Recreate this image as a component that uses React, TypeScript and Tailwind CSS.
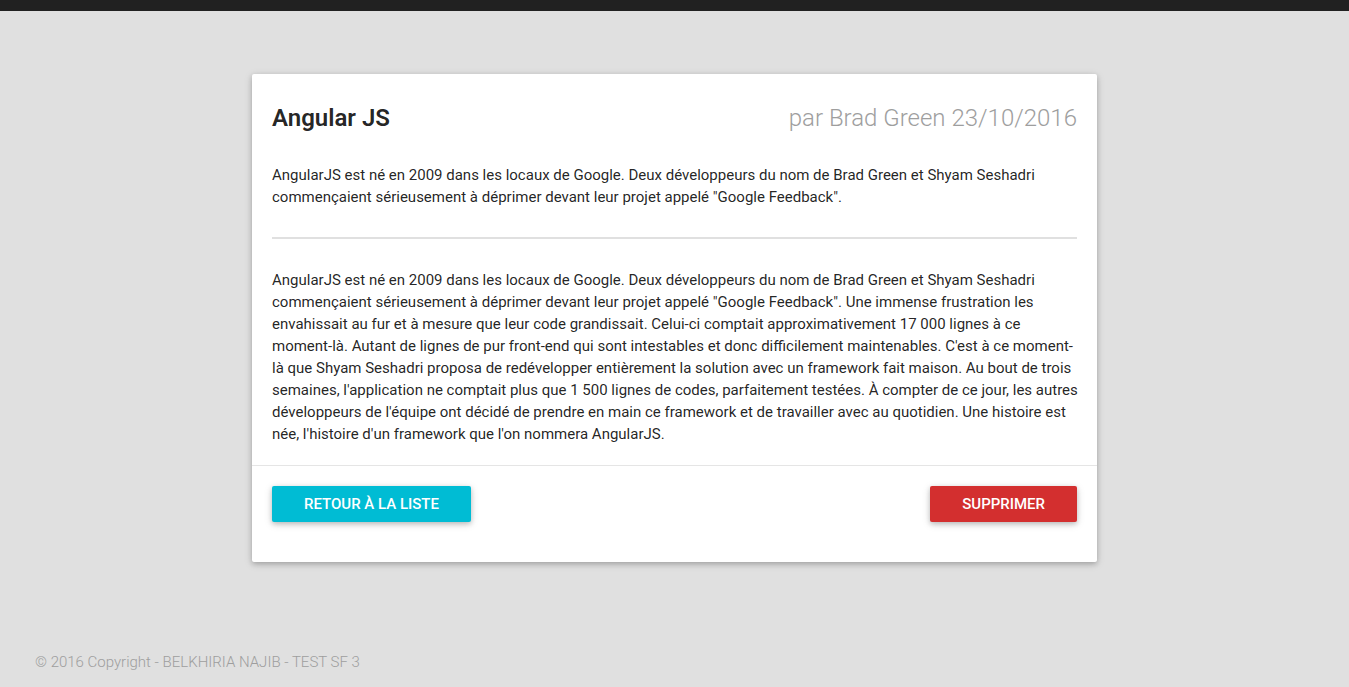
export default function App() {
  return (
    <div className="flex min-h-screen flex-col bg-[#e0e0e0] font-['Roboto',sans-serif] text-[15px] leading-[22px] text-black/87">
      <header className="h-[11px] bg-[#212121]" />
      <main className="mx-auto w-full max-w-[845px] flex-1 pt-[63px]">
        <article className="rounded-xs bg-white shadow-[0_2px_5px_0_rgba(0,0,0,0.2),0_2px_10px_0_rgba(0,0,0,0.12)]">
          <div className="p-5">
            <div className="flex flex-wrap items-center justify-between text-2xl leading-[48px]">
              <h1 className="font-semibold">Angular JS</h1>
              <p className="font-light text-[#9e9e9e]">par Brad Green 23/10/2016</p>
            </div>
            <p className="pt-[22px]">
              AngularJS est né en 2009 dans les locaux de Google. Deux développeurs du nom de Brad Green et Shyam Seshadri
              commençaient sérieusement à déprimer devant leur projet appelé "Google Feedback".
            </p>
            <hr className="mt-[29px] mb-[30px] border-t-2 border-[#e0e0e0]" />
            <p className="-mr-px">
              AngularJS est né en 2009 dans les locaux de Google. Deux développeurs du nom de Brad Green et Shyam Seshadri
              commençaient sérieusement à déprimer devant leur projet appelé "Google Feedback". Une immense frustration les
              envahissait au fur et à mesure que leur code grandissait. Celui-ci comptait approximativement 17 000 lignes à ce
              moment-là. Autant de lignes de pur front-end qui sont intestables et donc difficilement maintenables. C'est à ce
              moment-là que Shyam Seshadri proposa de redévelopper entièrement la solution avec un framework fait maison. Au
              bout de trois semaines, l'application ne comptait plus que 1 500 lignes de codes, parfaitement testées. À compter
              de ce jour, les autres développeurs de l'équipe ont décidé de prendre en main ce framework et de travailler avec
              au quotidien. Une histoire est née, l'histoire d'un framework que l'on nommera AngularJS.
            </p>
          </div>
          <div className="flex flex-wrap justify-between gap-3 border-t border-black/10 px-5 pt-5 pb-10 leading-9 font-medium text-white uppercase">
            <a href="#liste" className="rounded-xs bg-[#00bcd4] px-8 shadow-[0_2px_5px_0_rgba(0,0,0,0.2),0_2px_10px_0_rgba(0,0,0,0.12)]">
              Retour à la liste
            </a>
            <button type="button" className="rounded-xs bg-[#d32f2f] px-8 uppercase shadow-[0_2px_5px_0_rgba(0,0,0,0.2),0_2px_10px_0_rgba(0,0,0,0.12)]">
              Supprimer
            </button>
          </div>
        </article>
      </main>
      <footer className="px-[35px] pb-[14px] font-light text-[#9e9e9e]">© 2016 Copyright - BELKHIRIA NAJIB - TEST SF 3</footer>
    </div>
  );
}
